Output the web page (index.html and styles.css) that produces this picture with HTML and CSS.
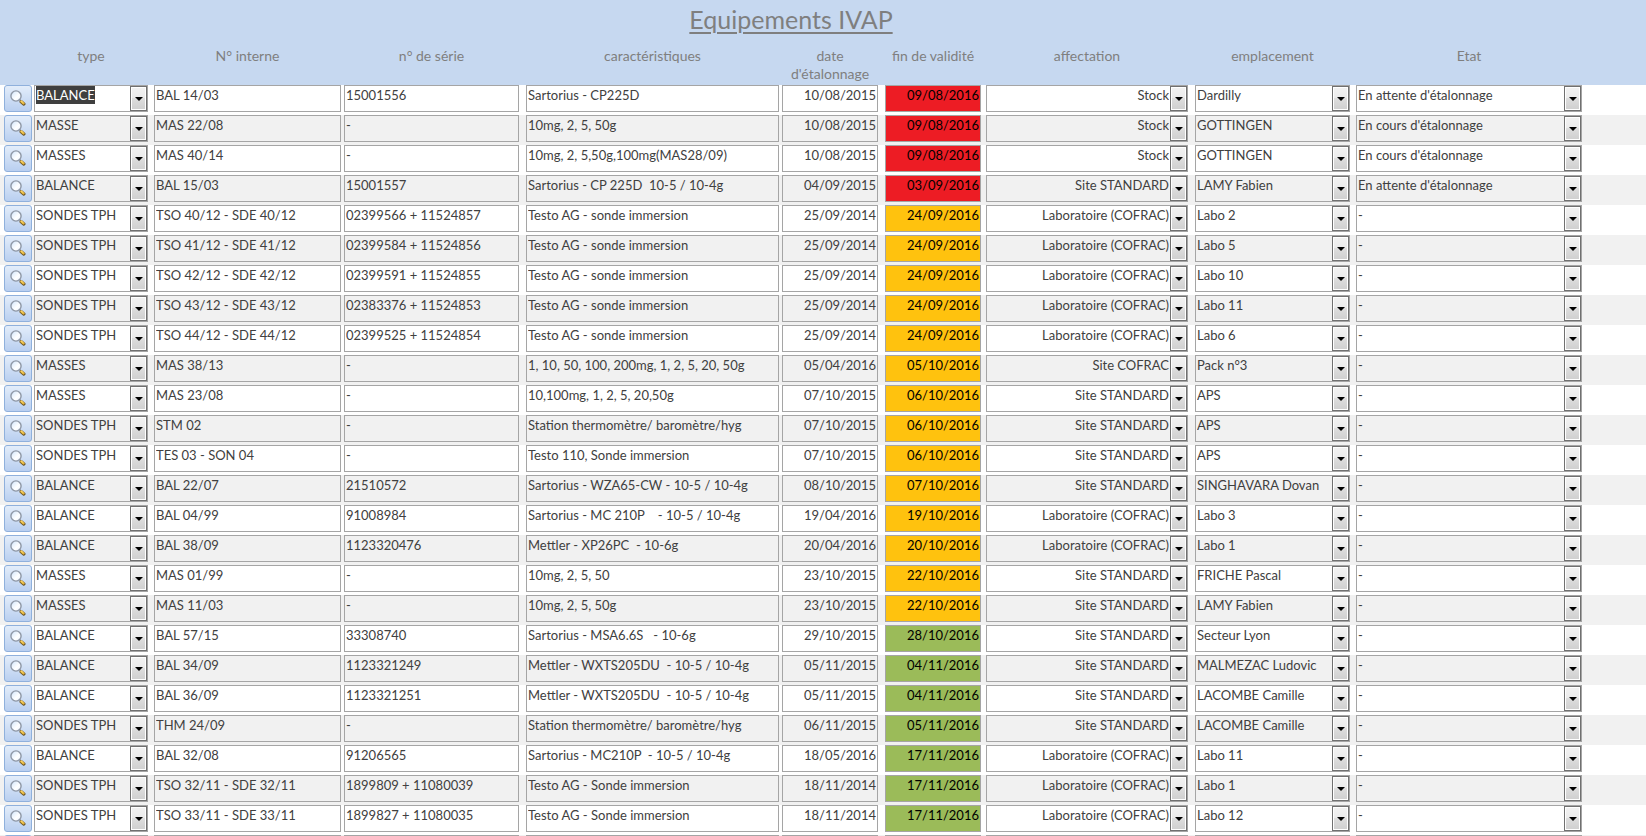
FILE: index.html
```html
<!DOCTYPE html>
<html lang="fr">
<head>
<meta charset="utf-8">
<title>Equipements IVAP</title>
<link rel="stylesheet" href="styles.css">
</head>
<body>
<svg class="defs" aria-hidden="true">
  <defs>
    <linearGradient id="lens" x1="0" y1="0" x2="1" y2="1">
      <stop offset="0" stop-color="#cfe4fb"/>
      <stop offset="0.6" stop-color="#ffffff"/>
      <stop offset="1" stop-color="#e4effc"/>
    </linearGradient>
    <symbol id="loupe" viewBox="0 0 16 16">
      <path d="M9.6 9.6l1.6 1.6" stroke="#8c8c94" stroke-width="1.6"/>
      <path d="M11.2 11.8l2.6 2.2" stroke="#6b5628" stroke-width="3.4" stroke-linecap="round"/>
      <path d="M11.2 11.4l2.4 2" stroke="#e9b93e" stroke-width="2.2" stroke-linecap="round"/>
      <path d="M11.4 11l1 0.9" stroke="#fbe7a0" stroke-width="1" stroke-linecap="round"/>
      <circle cx="6" cy="6" r="5.1" fill="url(#lens)" stroke="#8f98a6" stroke-width="1.4"/>
    </symbol>
  </defs>
</svg>
<header class="banner">
  <h1 class="title">Equipements IVAP</h1>
</header>
<table class="grid">
  <colgroup>
    <col class="w-open"><col class="w-type"><col class="w-interne"><col class="w-serie"><col class="w-carac">
    <col class="w-date"><col class="w-fin"><col class="w-affect"><col class="w-empl"><col class="w-etat">
  </colgroup>
  <thead>
    <tr>
      <td class="c-open"></td>
      <th class="c-type">type</th>
      <th class="c-interne">N° interne</th>
      <th class="c-serie">n° de série</th>
      <th class="c-carac">caractéristiques</th>
      <th class="c-date">date d'étalonnage</th>
      <th class="c-fin">fin de validité</th>
      <th class="c-affect">affectation</th>
      <th class="c-empl">emplacement</th>
      <th class="c-etat">Etat</th>
    </tr>
  </thead>
  <tbody id="rows"></tbody>
</table>
<script src="app.js"></script>
</body>
</html>
```

FILE: styles.css
```css
* { box-sizing: border-box; }

body {
  margin: 0;
  height: 100vh;
  overflow: hidden;
  background: #fff;
  color: #404040;
  font-family: Lato, Calibri, "Liberation Sans", sans-serif;
  font-size: 13px;
}

.defs { position: absolute; width: 0; height: 0; }

.banner {
  padding: 3px 64px 0 0;
  height: 47px;
  background: #c6d8f0;
  text-align: center;
}

.title {
  margin: 0;
  color: #7f7f7f;
  font-size: 25px;
  font-weight: 400;
  line-height: 32px;
  text-decoration: underline;
  text-decoration-thickness: 2px;
  text-underline-offset: 3px;
}

.grid {
  width: 100%;
  table-layout: fixed;
  border-collapse: collapse;
}

.w-open { width: 34px; }
.w-type { width: 120px; }
.w-interne { width: 190px; }
.w-serie { width: 182px; }
.w-carac { width: 256px; }
.w-date { width: 103px; }
.w-fin { width: 101px; }
.w-affect { width: 209px; }
.w-empl { width: 161px; }

.grid th, .grid td { padding: 0; vertical-align: top; }

.grid .c-open { padding: 0 2px 0 4px; }
.grid .c-type { padding-right: 6px; }
.grid .c-interne { padding-right: 3px; }
.grid .c-serie { padding-right: 7px; }
.grid .c-carac { padding-right: 3px; }
.grid .c-date { padding-right: 7px; }
.grid .c-fin { padding-right: 5px; }
.grid .c-affect { padding-right: 7px; }
.grid .c-empl { padding-right: 6px; }
.grid .c-etat { padding-right: 64px; }

thead tr { height: 38px; background: #c6d8f0; }

thead th {
  color: #7f7f7f;
  font-size: 14px;
  font-weight: 400;
  line-height: 18px;
  text-align: center;
}

tbody tr { height: 30px; }
tbody tr:nth-child(even) { background: #f1f1f1; }

.open {
  display: block;
  width: 28px;
  height: 27px;
  padding: 4px 5px 5px;
  border: 1px solid #8fb0dc;
  border-radius: 3px;
  background: linear-gradient(#e3edfa, #b9cff0);
}

.open svg { display: block; width: 16px; height: 16px; }

.field {
  display: block;
  width: 100%;
  height: 27px;
  margin: 0;
  padding: 0 18px 7px 1px;
  border: 1px solid #a5a5a5;
  border-radius: 0;
  outline: 0;
  background: transparent;
  color: inherit;
  font: inherit;
  appearance: none;
}

.field.date { padding-right: 1px; text-align: right; }
.field.fin { color: #000; }
.field.late { background: #ed1c24; }
.field.soon { background: #ffc20e; }
.field.fine { background: #9bbb59; }
.c-affect .field { text-align-last: right; }

.field.current {
  background: linear-gradient(#3f3f3f, #3f3f3f) 1px 0 / 59px 18px no-repeat;
  color: #fff;
}

.combo { display: grid; }
.combo > * { grid-area: 1 / 1; }

.arrow {
  display: grid;
  place-items: center;
  justify-self: end;
  width: 17px;
  height: 25px;
  margin: 1px 1px 0 0;
  border: 1px solid #707070;
  box-shadow: inset 0 0 0 1px #fff;
  background: linear-gradient(#f2f2f2, #ebebeb 50%, #dddddd 50%, #cfcfcf);
  pointer-events: none;
}

.arrow::after {
  content: "";
  border: 4px solid transparent;
  border-top-color: #000;
  border-bottom: 0;
}
```

FILE: app.js
```js
const COFRAC = "Laboratoire (COFRAC)";
const STD = "Site STANDARD";
const IMM = "Testo AG - sonde immersion";

const data = [
  ["BALANCE", "BAL 14/03", "15001556", "Sartorius - CP225D", "10/08/2015", "09/08/2016", "late", "Stock", "Dardilly", "En attente d'étalonnage"],
  ["MASSE", "MAS 22/08", "-", "10mg, 2, 5, 50g", "10/08/2015", "09/08/2016", "late", "Stock", "GOTTINGEN", "En cours d'étalonnage"],
  ["MASSES", "MAS 40/14", "-", "10mg, 2, 5,50g,100mg(MAS28/09)", "10/08/2015", "09/08/2016", "late", "Stock", "GOTTINGEN", "En cours d'étalonnage"],
  ["BALANCE", "BAL 15/03", "15001557", "Sartorius - CP 225D  10-5 / 10-4g", "04/09/2015", "03/09/2016", "late", STD, "LAMY Fabien", "En attente d'étalonnage"],
  ["SONDES TPH", "TSO 40/12 - SDE 40/12", "02399566 + 11524857", IMM, "25/09/2014", "24/09/2016", "soon", COFRAC, "Labo 2", "-"],
  ["SONDES TPH", "TSO 41/12 - SDE 41/12", "02399584 + 11524856", IMM, "25/09/2014", "24/09/2016", "soon", COFRAC, "Labo 5", "-"],
  ["SONDES TPH", "TSO 42/12 - SDE 42/12", "02399591 + 11524855", IMM, "25/09/2014", "24/09/2016", "soon", COFRAC, "Labo 10", "-"],
  ["SONDES TPH", "TSO 43/12 - SDE 43/12", "02383376 + 11524853", IMM, "25/09/2014", "24/09/2016", "soon", COFRAC, "Labo 11", "-"],
  ["SONDES TPH", "TSO 44/12 - SDE 44/12", "02399525 + 11524854", IMM, "25/09/2014", "24/09/2016", "soon", COFRAC, "Labo 6", "-"],
  ["MASSES", "MAS 38/13", "-", "1, 10, 50, 100, 200mg, 1, 2, 5, 20, 50g", "05/04/2016", "05/10/2016", "soon", "Site COFRAC", "Pack n°3", "-"],
  ["MASSES", "MAS 23/08", "-", "10,100mg, 1, 2, 5, 20,50g", "07/10/2015", "06/10/2016", "soon", STD, "APS", "-"],
  ["SONDES TPH", "STM 02", "-", "Station thermomètre/ baromètre/hyg", "07/10/2015", "06/10/2016", "soon", STD, "APS", "-"],
  ["SONDES TPH", "TES 03 - SON 04", "-", "Testo 110, Sonde immersion", "07/10/2015", "06/10/2016", "soon", STD, "APS", "-"],
  ["BALANCE", "BAL 22/07", "21510572", "Sartorius - WZA65-CW - 10-5 / 10-4g", "08/10/2015", "07/10/2016", "soon", STD, "SINGHAVARA Dovan", "-"],
  ["BALANCE", "BAL 04/99", "91008984", "Sartorius - MC 210P    - 10-5 / 10-4g", "19/04/2016", "19/10/2016", "soon", COFRAC, "Labo 3", "-"],
  ["BALANCE", "BAL 38/09", "1123320476", "Mettler - XP26PC  - 10-6g", "20/04/2016", "20/10/2016", "soon", COFRAC, "Labo 1", "-"],
  ["MASSES", "MAS 01/99", "-", "10mg, 2, 5, 50", "23/10/2015", "22/10/2016", "soon", STD, "FRICHE Pascal", "-"],
  ["MASSES", "MAS 11/03", "-", "10mg, 2, 5, 50g", "23/10/2015", "22/10/2016", "soon", STD, "LAMY Fabien", "-"],
  ["BALANCE", "BAL 57/15", "33308740", "Sartorius - MSA6.6S   - 10-6g", "29/10/2015", "28/10/2016", "fine", STD, "Secteur Lyon", "-"],
  ["BALANCE", "BAL 34/09", "1123321249", "Mettler - WXTS205DU  - 10-5 / 10-4g", "05/11/2015", "04/11/2016", "fine", STD, "MALMEZAC Ludovic", "-"],
  ["BALANCE", "BAL 36/09", "1123321251", "Mettler - WXTS205DU  - 10-5 / 10-4g", "05/11/2015", "04/11/2016", "fine", STD, "LACOMBE Camille", "-"],
  ["SONDES TPH", "THM 24/09", "-", "Station thermomètre/ baromètre/hyg", "06/11/2015", "05/11/2016", "fine", STD, "LACOMBE Camille", "-"],
  ["BALANCE", "BAL 32/08", "91206565", "Sartorius - MC210P  - 10-5 / 10-4g", "18/05/2016", "17/11/2016", "fine", COFRAC, "Labo 11", "-"],
  ["SONDES TPH", "TSO 32/11 - SDE 32/11", "1899809 + 11080039", "Testo AG - Sonde immersion", "18/11/2014", "17/11/2016", "fine", COFRAC, "Labo 1", "-"],
  ["SONDES TPH", "TSO 33/11 - SDE 33/11", "1899827 + 11080035", "Testo AG - Sonde immersion", "18/11/2014", "17/11/2016", "fine", COFRAC, "Labo 12", "-"],
  ["", "", "", "", "", "", "", "", "", ""]
];

const text = (col, label, value, extra = "") =>
  `<td class="c-${col}"><input class="field ${extra}" type="text" aria-label="${label}" value="${value}"></td>`;

const combo = (col, label, value, extra = "") =>
  `<td class="c-${col}"><div class="combo"><select class="field ${extra}" aria-label="${label}"><option>${value}</option></select><span class="arrow"></span></div></td>`;

document.getElementById("rows").innerHTML = data.map((r, i) => `<tr>
  <td class="c-open"><button class="open" type="button" aria-label="Ouvrir la fiche"><svg><use href="#loupe"/></svg></button></td>
  ${combo("type", "type", r[0], i === 0 ? "current" : "")}
  ${text("interne", "N° interne", r[1])}
  ${text("serie", "n° de série", r[2])}
  ${text("carac", "caractéristiques", r[3])}
  ${text("date", "date d'étalonnage", r[4], "date")}
  ${text("fin", "fin de validité", r[5], "date fin " + r[6])}
  ${combo("affect", "affectation", r[7])}
  ${combo("empl", "emplacement", r[8])}
  ${combo("etat", "Etat", r[9])}
</tr>`).join("");
```
